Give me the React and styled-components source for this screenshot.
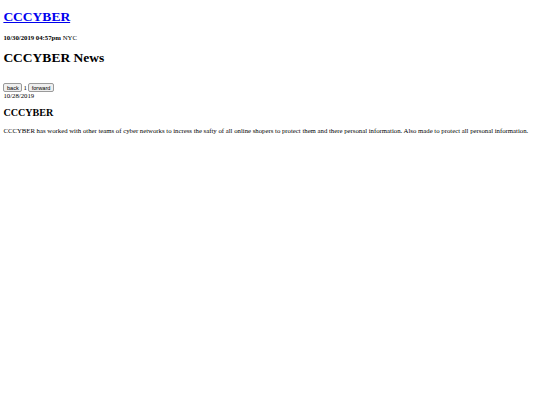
import React from "react";
import styled, { createGlobalStyle } from "styled-components";

const S = 540 / 1280;
const px = (n) => `${(n * S).toFixed(3)}px`;

const Global = createGlobalStyle`
  html, body { background: #ffffff; }
  body {
    margin: ${px(8)};
    font-family: "Liberation Serif", "Times New Roman", serif;
    font-size: ${px(16)};
    color: #000000;
  }
`;

const Title = styled.h1`
  font-size: ${px(32)};
  font-weight: bold;
  margin: ${(p) => (p.$first ? px(14) : px(21.44))} 0 ${px(21.44)};
`;

const TitleLink = styled.a`
  color: #0000ee;
  text-decoration: underline;
`;

const DateLine = styled.div`
  font-size: ${px(16)};
`;

const Slider = styled.section`
  margin-top: ${px(40)};
`;

const Controls = styled.div`
  display: flex;
  align-items: center;
  gap: ${px(3)};
`;

const NavButton = styled.button`
  font-family: Arial, "Liberation Sans", sans-serif;
  font-size: ${px(13.333)};
  line-height: normal;
  padding: ${px(1)} ${px(6)};
  border: 1px solid #9a9a9a;
  border-radius: 2px;
  background: #efefef;
  color: #000000;
  margin: 0;
`;

const Index = styled.span`
  font-size: ${px(16)};
`;

const SubTitle = styled.h2`
  font-size: ${px(24)};
  font-weight: bold;
  margin: ${px(19.92)} 0;
`;

const Body = styled.p`
  margin: ${px(16)} 0;
`;

export default function App() {
  return (
    <>
      <Global />
      <header>
        <Title $first>
          <TitleLink href="#">CCCYBER</TitleLink>
        </Title>
        <DateLine>
          <b>10/30/2019 04:57pm</b> NYC
        </DateLine>
      </header>
      <main>
        <Title>CCCYBER News</Title>
        <Slider>
          <Controls>
            <NavButton>back</NavButton>
            <Index>1</Index>
            <NavButton>forward</NavButton>
          </Controls>
          <article>
            <DateLine>10/28/2019</DateLine>
            <SubTitle>CCCYBER</SubTitle>
            <Body>
              CCCYBER has worked with other teams of cyber networks to incress the safty of all online shopers to protect them and there personal information. Also made to protect all personal information.
            </Body>
          </article>
        </Slider>
      </main>
    </>
  );
}
